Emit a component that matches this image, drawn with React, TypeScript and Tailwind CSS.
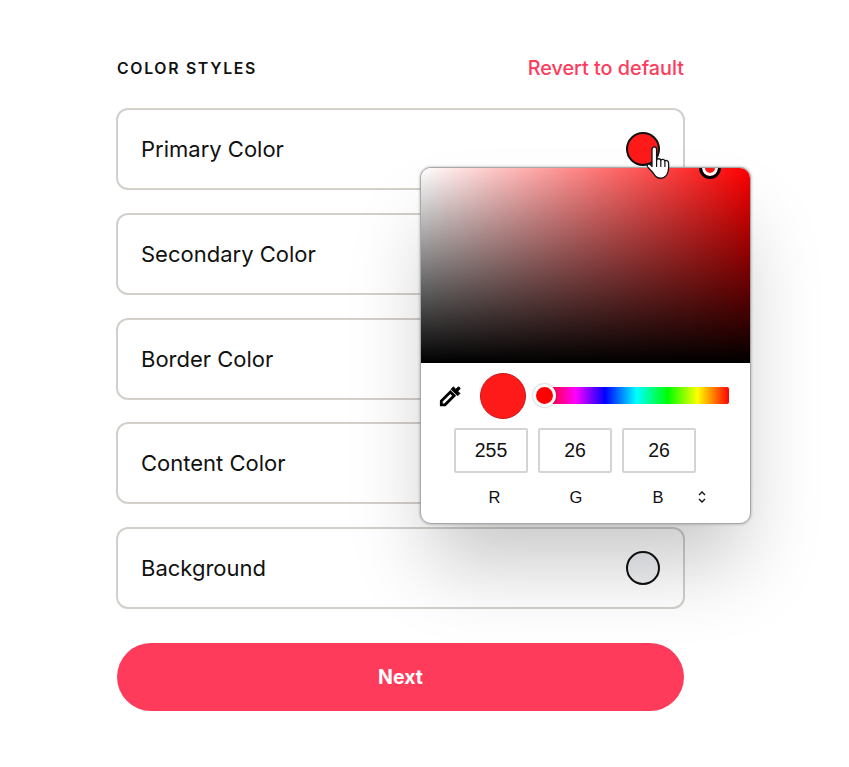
import React from "react";

function Row({ label, swatch }: { label: string; swatch: string }) {
  return (
    <div className="relative flex h-[82px] items-center justify-between rounded-[12px] border-2 border-[#d3cfcb] bg-white pl-[23px] pr-[23.500px]">
      <span className="text-[22px] leading-none text-[#111]">{label}</span>
      <span className={`block h-[34px] w-[34px] rounded-full border-2 border-[#111] ${swatch}`} />
    </div>
  );
}

function Dropper() {
  return (
    <svg width="24" height="24" viewBox="0 0 24 24" className="block">
      <path d="M15.400 2.800 17.800 5.200 19.800 3.200C20.900 2.100 22.900 4.100 21.800 5.200L19.800 7.200 22 9.400 19.600 11.800 13 5.200z" fill="#000" stroke="#000" strokeWidth="0.8" strokeLinejoin="round" />
      <path d="M12.400 8 16.100 11.700 7 20.800H3.300V17.100z" fill="#fff" stroke="#000" strokeWidth="2.800" strokeLinejoin="miter" />
    </svg>
  );
}

function Hand() {
  return (
    <svg width="26" height="36" viewBox="0 0 26 36" className="absolute left-[646px] top-[146px] z-20">
      <path
        d="M6 3.500c0-1.600 1-2.700 2.300-2.700S10.600 1.900 10.600 3.500V14c.4-1.700 3.800-1.700 4.200.3.600-1.400 3.700-1.300 4.100.7.800-1 3.300-.7 3.600 1.300.3 2.600.3 6.500-.3 8.800-.8 3.300-3 6.400-6.200 7-3.200.5-6-.8-7.500-3.200C7.300 26.500 5 24.500 3 22.500 2 21.500 1 20.500 1.200 19.500c.3-1.500 1.900-1.900 3-1.100.7.500 1.200 1.300 1.800 2V3.500z"
        fill="#fff"
        stroke="#111"
        strokeWidth="1.300"
        strokeLinejoin="round"
      />
      <path d="M10.600 14v6.500M14.800 14.500v6M18.900 15.500v5" stroke="#111" strokeWidth="1.200" fill="none" strokeLinecap="round" />
    </svg>
  );
}

function Rgb({ value }: { value: string }) {
  return (
    <div className="flex h-[45px] w-[74px] items-center justify-center rounded-[2px] border-2 border-[#d4d4d4] text-[19.500px] text-[#111]">
      {value}
    </div>
  );
}

export default function App() {
  return (
    <div className="relative h-[767px] w-[849px] overflow-hidden bg-white [font-family:'Inter','Liberation_Sans',sans-serif]">
      <div className="relative ml-[116px] w-[569px] pt-[59px]">
        <div className="flex h-[20px] items-center justify-between px-[1px]">
          <span className="text-[15.800px] font-semibold tracking-[1.700px] text-[#111]">COLOR STYLES</span>
          <span className="text-[19.800px] font-medium text-[#ff3b5c]">Revert to default</span>
        </div>
        <div className="mt-[29px] flex flex-col gap-[22.750px]">
          <Row label="Primary Color" swatch="bg-[#ff1a1a]" />
          <Row label="Secondary Color" swatch="bg-white" />
          <Row label="Border Color" swatch="bg-white" />
          <Row label="Content Color" swatch="bg-white" />
          <Row label="Background" swatch="bg-[#f0f2f5]" />
        </div>
        <button className="mx-[1px] mt-[34px] block h-[68px] w-[567px] rounded-full bg-[#ff3b5c] pt-[2px] text-[19.500px] font-bold text-white">
          Next
        </button>
      </div>

      <Hand />

      <div className="absolute left-[420px] top-[167px] z-10 h-[357px] w-[331px] overflow-hidden rounded-[11px] border border-[#a8a8a8] bg-white shadow-[0_0_3px_rgba(0,0,0,0.3),0_50px_80px_-10px_rgba(0,0,0,0.22)]">
        <div className="relative h-[195px] w-full overflow-hidden bg-[linear-gradient(to_top,#000,rgba(0,0,0,0)),linear-gradient(to_right,#fff,#f00)]">
          <span className="absolute left-[278px] top-[-11px] block h-[22px] w-[22px] rounded-full border-[3px] border-black bg-[#ff1a1a] shadow-[inset_0_0_0_3px_#fff]" />
        </div>
        <div className="flex items-center pl-[17px] pt-[10px]">
          <Dropper />
          <span className="ml-[18px] block h-[46px] w-[46px] rounded-full border border-[#cc1515] bg-[#ff1a1a]" />
          <div className="relative mb-[1px] ml-[18px] h-[17px] w-[185px] rounded-[2px] bg-[linear-gradient(to_right,#f00,#f0f_17%,#00f_33%,#0ff_50%,#0f0_67%,#ff0_83%,#f00)]">
            <span className="absolute left-[-11px] top-[-3px] block h-[23px] w-[23px] rounded-full border-[3px] border-white bg-[#f00] shadow-[0_0_2px_rgba(0,0,0,0.4)]" />
          </div>
        </div>
        <div className="mt-[9px] flex gap-[10px] pl-[33px] [font-family:'Liberation_Sans',sans-serif]">
          <Rgb value="255" />
          <Rgb value="26" />
          <Rgb value="26" />
        </div>
        <div className="relative mt-[14px] flex h-[20px] items-center pl-[33px] text-[16.500px] text-[#111] [font-family:'Liberation_Sans',sans-serif]">
          <span className="w-[81px] text-center">R</span>
          <span className="w-[82px] text-center">G</span>
          <span className="w-[82px] text-center">B</span>
          <svg width="10" height="14" viewBox="0 0 10 14" className="ml-[-2px]">
            <path d="M2 5l3-3 3 3M2 9l3 3 3-3" fill="none" stroke="#111" strokeWidth="1.400" />
          </svg>
        </div>
      </div>
    </div>
  );
}
